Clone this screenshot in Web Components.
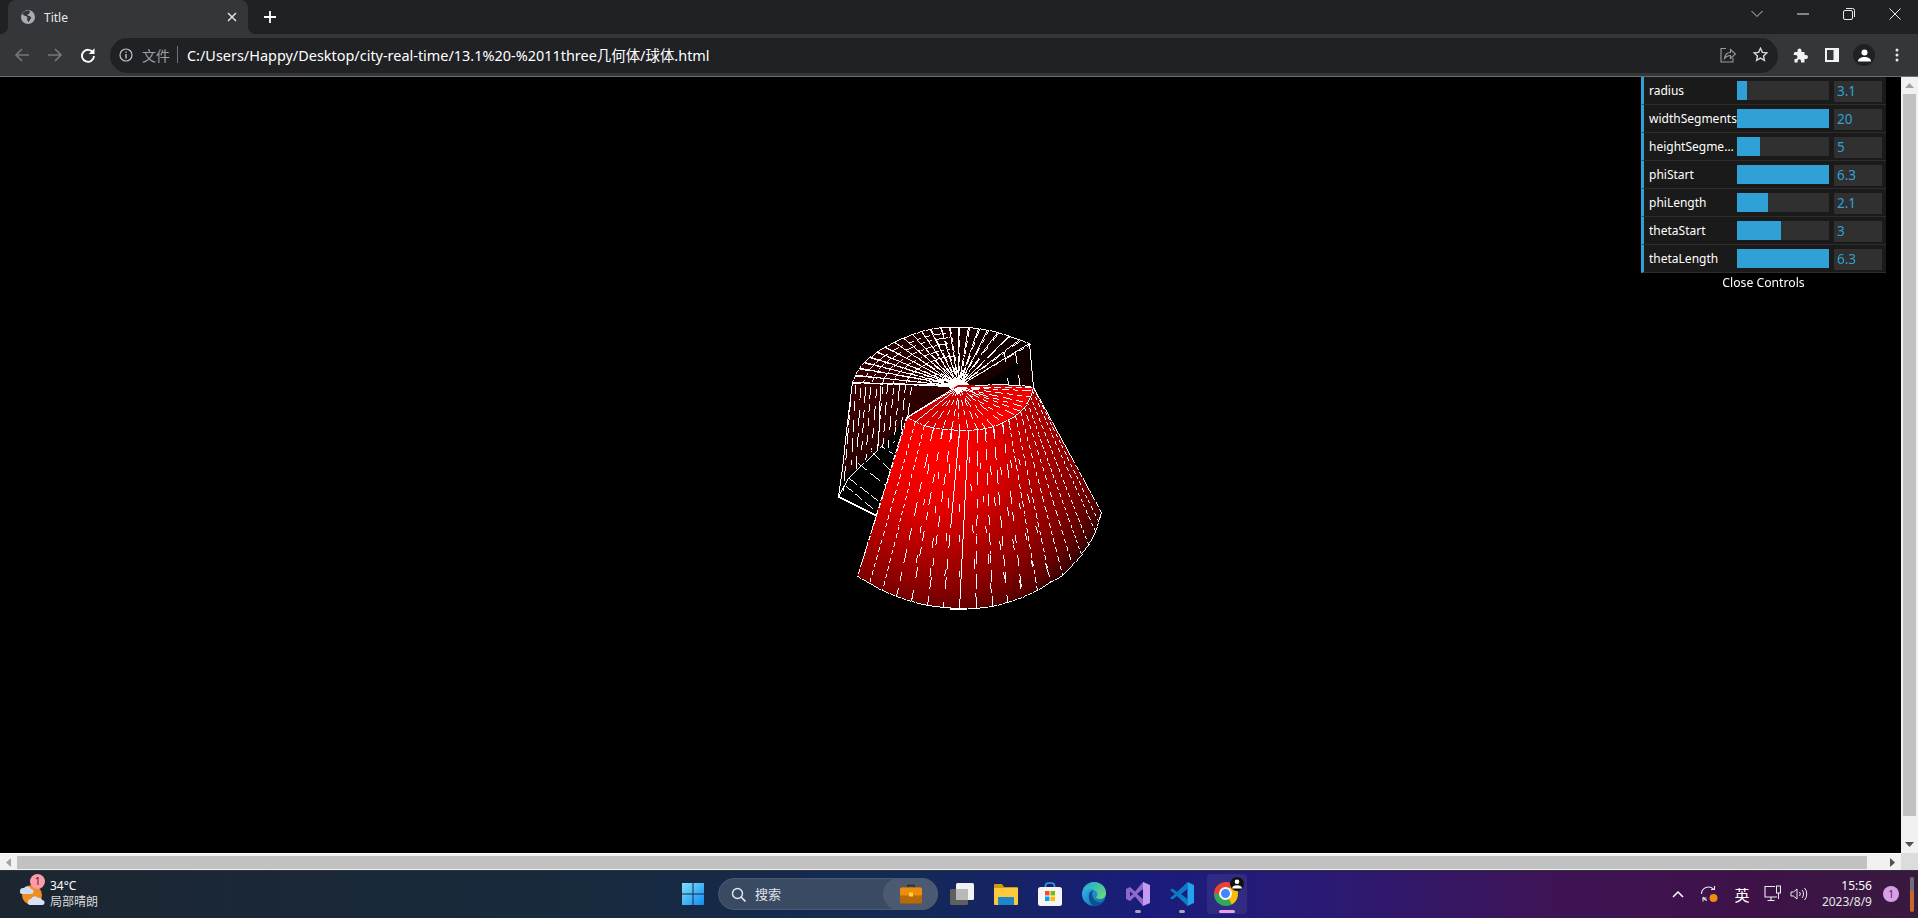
<!DOCTYPE html>
<html lang="zh">
<head>
<meta charset="utf-8">
<title>Title</title>
<style>
	html,body {margin:0;padding:0;width:1918px;height:918px;overflow:hidden;background:#000;}
	body {display:flex;flex-direction:column;font-family:"Noto Sans","Noto Sans CJK SC",sans-serif;}
</style>
</head>
<body>
<chrome-tabstrip></chrome-tabstrip>
<chrome-toolbar url="C:/Users/Happy/Desktop/city-real-time/13.1%20-%2011three几何体/球体.html"></chrome-toolbar>
<page-area>
	<mesh-view></mesh-view>
	<gui-panel>
		<gui-row label="radius" value="3.1" fill="10"></gui-row>
		<gui-row label="widthSegments" value="20" fill="92"></gui-row>
		<gui-row label="heightSegments" value="5" fill="23"></gui-row>
		<gui-row label="phiStart" value="6.3" fill="92"></gui-row>
		<gui-row label="phiLength" value="2.1" fill="31"></gui-row>
		<gui-row label="thetaStart" value="3" fill="44"></gui-row>
		<gui-row label="thetaLength" value="6.3" fill="92"></gui-row>
	</gui-panel>
</page-area>
<win-taskbar></win-taskbar>
<script>
class ShadowPart extends HTMLElement {
	constructor(){
		super();
		this.attachShadow({mode:"open"});
	}
}

class ChromeTabstrip extends ShadowPart {
	constructor(){
		super();
		this.shadowRoot.innerHTML = `
			<style>
				:host {display:flex;height:34px;background:#202124;color:#e8eaed;font-size:12px;align-items:stretch;}
				.tab {position:relative;margin-left:8px;width:240px;background:#35363a;border-radius:8px 8px 0 0;display:flex;align-items:center;box-sizing:border-box;padding:0 0 0 12px;}
				.tab::before,.tab::after {content:"";position:absolute;bottom:0;width:8px;height:8px;}
				.tab::before {left:-8px;background:radial-gradient(circle at 0 0,#202124 8px,#35363a 8.5px);}
				.tab::after {right:-8px;background:radial-gradient(circle at 100% 0,#202124 8px,#35363a 8.5px);}
				.title {margin-left:8px;flex:1;}
				.x {width:24px;height:24px;margin-right:4px;display:flex;align-items:center;justify-content:center;}
				.plus {width:26px;margin-left:9px;display:flex;align-items:center;justify-content:center;}
				.spacer {flex:1;}
				.btn {width:46px;display:flex;align-items:center;justify-content:center;padding-bottom:6px;}
				svg {display:block;}
			</style>
			<div class="tab">
				<svg width="16" height="16" viewBox="0 0 16 16"><circle cx="8" cy="8" r="7" fill="#a9acb0"/><path d="M8 1.500C5 1.500 3 3 2.200 5l2.300 1.800 1.500.2 1.500 1.500-.5 2 1 2.500 1-.5 1.500-2.500 1-1.500-2-1.500-1.500-.2-.5-1.300 1.500-.8 1-1.500C9.800 1.700 9 1.500 8 1.500z" fill="#35363a"/></svg>
				<span class="title">Title</span>
				<span class="x"><svg width="10" height="10" viewBox="0 0 10 10"><path d="M1 1l8 8M9 1l-8 8" stroke="#e8eaed" stroke-width="1.400"/></svg></span>
			</div>
			<span class="plus"><svg width="12" height="12" viewBox="0 0 12 12"><path d="M6 0v12M0 6h12" stroke="#fff" stroke-width="1.800"/></svg></span>
			<span class="spacer"></span>
			<span class="btn"><svg width="12" height="8" viewBox="0 0 12 8"><path d="M.5 1l5.500 5.500L11.500 1" fill="none" stroke="#c4c6c8"/></svg></span>
			<span class="btn"><svg width="12" height="2" viewBox="0 0 12 2"><path d="M0 1h12" stroke="#e8eaed"/></svg></span>
			<span class="btn"><svg width="12" height="12" viewBox="0 0 12 12"><rect x=".5" y="2.500" width="9" height="9" rx="1.500" fill="none" stroke="#e8eaed"/><path d="M3 .5h6.500a2 2 0 0 1 2 2V9" fill="none" stroke="#e8eaed"/></svg></span>
			<span class="btn"><svg width="12" height="12" viewBox="0 0 12 12"><path d="M.5.5l11 11M11.500.5l-11 11" stroke="#e8eaed"/></svg></span>
		`;
	}
}
customElements.define("chrome-tabstrip",ChromeTabstrip);

class ChromeToolbar extends ShadowPart {
	connectedCallback(){
		this.shadowRoot.innerHTML = `
			<style>
				:host {display:flex;height:43px;box-sizing:border-box;background:#35363a;border-bottom:1px solid #6f7073;padding:4px 4px 3px 5px;font-size:14.450px;color:#fff;}
				.btn {width:33px;display:flex;align-items:center;justify-content:center;flex:none;padding-bottom:1px;}
				.omni {flex:1;margin:0 6px;background:#202124;border-radius:18px;display:flex;align-items:center;padding:0 2px 2px 0;}
				.info {width:18px;margin-left:7px;display:flex;justify-content:center;}
				.scheme {margin-left:7px;color:#9aa0a6;font-size:14px;}
				.sep {width:1px;height:17px;background:#6f7175;margin:0 9px 0 7px;}
				.url {flex:1;white-space:nowrap;}
				.mini {width:32px;display:flex;justify-content:center;}
				.avatar {width:22px;height:22px;border-radius:50%;background:#202124;display:flex;align-items:center;justify-content:center;}
				svg {display:block;}
			</style>
			<span class="btn"><svg width="16" height="14" viewBox="0 0 16 14"><path d="M15 7H2M8 1L2 7l6 6" fill="none" stroke="#75777a" stroke-width="1.700"/></svg></span>
			<span class="btn"><svg width="16" height="14" viewBox="0 0 16 14"><path d="M1 7h13M8 1l6 6-6 6" fill="none" stroke="#75777a" stroke-width="1.700"/></svg></span>
			<span class="btn"><svg width="16" height="16" viewBox="0 0 16 16"><path d="M13 5.500A6 6 0 1 0 14 9" fill="none" stroke="#fff" stroke-width="1.900"/><path d="M14.500 1.200V7H8.700z" fill="#fff"/></svg></span>
			<div class="omni">
				<span class="info"><svg width="14" height="14" viewBox="0 0 14 14"><circle cx="7" cy="7" r="6" fill="none" stroke="#c0c3c6" stroke-width="1.200"/><path d="M7 6v4.500M7 3.500v1.300" stroke="#c0c3c6" stroke-width="1.400"/></svg></span>
				<span class="scheme">文件</span>
				<span class="sep"></span>
				<span class="url">${this.getAttribute("url")}</span>
				<span class="mini"><svg width="16" height="16" viewBox="0 0 16 16"><path d="M6 1.500H1v13.500h12v-4" fill="none" stroke="#9a9da1" stroke-width="1.100"/><path d="M4.500 11.500C5 7.500 7.500 5.500 10.500 5.500V2.500L15.500 7l-5 4.500V8.500C8 8.500 6 9.500 4.500 11.500z" fill="none" stroke="#9a9da1" stroke-width="1.100"/></svg></span>
				<span class="mini"><svg width="15" height="15" viewBox="0 0 15 15"><path d="M7.500 1.300l1.900 4.100 4.400.5-3.300 3 .9 4.400-3.900-2.200-3.900 2.200.9-4.400-3.300-3 4.400-.5z" fill="none" stroke="#d5d7d9" stroke-width="1.400"/></svg></span>
			</div>
			<span class="btn" style="width:32px"><svg width="15" height="15" viewBox="0 0 15 15"><path d="M1 4.500h3V3a2 2 0 0 1 4 0v1.500h3v3h1.500a2 2 0 0 1 0 4H11V15H7.500v-1.500a1.700 1.700 0 0 0-3.400 0V15H1v-3.500h1a2 2 0 0 0 0-4H0z" fill="#f1f3f4" transform="translate(.5 -.5)"/></svg></span>
			<span class="btn" style="width:32px"><svg width="14" height="14" viewBox="0 0 14 14"><rect width="14" height="14" fill="#f1f3f4"/><rect x="2" y="2" width="6.500" height="10" fill="#35363a"/></svg></span>
			<span class="btn" style="width:32px"><span class="avatar"><svg width="13" height="13" viewBox="0 0 13 13"><circle cx="6.500" cy="3.500" r="3" fill="#fff"/><path d="M0 12.500c0-3 3-4.500 6.500-4.500S13 9.500 13 12.500z" fill="#fff"/></svg></span></span>
			<span class="btn" style="width:34px"><svg width="4" height="14" viewBox="0 0 4 14"><circle cx="2" cy="2" r="1.500" fill="#e8eaed"/><circle cx="2" cy="7" r="1.500" fill="#e8eaed"/><circle cx="2" cy="12" r="1.500" fill="#e8eaed"/></svg></span>
		`;
	}
}
customElements.define("chrome-toolbar",ChromeToolbar);

class PageArea extends ShadowPart {
	constructor(){
		super();
		this.shadowRoot.innerHTML = `
			<style>
				:host {display:grid;grid-template-columns:1901px 17px;grid-template-rows:776px 17px;}
				.view {position:relative;background:#000;overflow:hidden;}
				.bar {background:#f1f1f1;position:relative;display:flex;}
				.v {flex-direction:column;align-items:center;}
				.h {align-items:center;border-top:1px solid #fff;box-sizing:border-box;}
				.thumb {background:#c1c1c1;}
				.v .thumb {width:13px;height:722px;}
				.h .thumb {height:13px;width:1850px;}
				.arrow {flex:none;width:17px;height:17px;display:flex;align-items:center;justify-content:center;}
				.fill {flex:1;}
				.corner {background:#dcdcdc;}
				svg {display:block;}
			</style>
			<div class="view"><slot></slot></div>
			<div class="bar v">
				<span class="arrow"><svg width="9" height="5" viewBox="0 0 9 5"><path d="M4.500 0L9 5H0z" fill="#a3a3a3"/></svg></span>
				<div class="thumb"></div>
				<div class="fill"></div>
				<span class="arrow"><svg width="9" height="5" viewBox="0 0 9 5"><path d="M0 0h9L4.500 5z" fill="#505050"/></svg></span>
			</div>
			<div class="bar h">
				<span class="arrow"><svg width="5" height="9" viewBox="0 0 5 9"><path d="M5 0v9L0 4.500z" fill="#a3a3a3"/></svg></span>
				<div class="thumb"></div>
				<div class="fill"></div>
				<span class="arrow"><svg width="5" height="9" viewBox="0 0 5 9"><path d="M0 0v9l5-4.500z" fill="#505050"/></svg></span>
			</div>
			<div class="corner"></div>
		`;
	}
}
customElements.define("page-area",PageArea);

class GuiPanel extends ShadowPart {
	constructor(){
		super();
		this.shadowRoot.innerHTML = `
			<style>
				:host {position:absolute;top:0;right:15px;width:245px;color:#fff;font:12.200px "Noto Sans",sans-serif;}
				.close {height:20px;line-height:19px;text-align:center;}
			</style>
			<slot></slot>
			<div class="close">Close Controls</div>
		`;
	}
}
customElements.define("gui-panel",GuiPanel);

class GuiRow extends ShadowPart {
	connectedCallback(){
		this.shadowRoot.innerHTML = `
			<style>
				:host {display:flex;height:28px;box-sizing:border-box;background:#1a1a1a;border-left:3px solid #2fa1d6;border-bottom:1px solid #2c2c2c;}
				.label {width:89px;margin:0 -1px 0 5px;flex:none;font-size:12px;line-height:27px;white-space:nowrap;overflow:hidden;text-overflow:ellipsis;}
				.slider {width:92px;height:19px;margin-top:4px;background:#303030;flex:none;}
				.fill {height:100%;background:#2fa1d6;}
				.num {width:48px;height:21px;margin:4px 0 0 5px;padding-left:3px;box-sizing:border-box;background:#303030;color:#2fa1d6;line-height:21px;font-size:13.500px;flex:none;}
			</style>
			<div class="label">${this.getAttribute("label")}</div>
			<div class="slider"><div class="fill" style="width:${this.getAttribute("fill")}px"></div></div>
			<div class="num">${this.getAttribute("value")}</div>
		`;
	}
}
customElements.define("gui-row",GuiRow);

class MeshView extends ShadowPart {
	constructor(){
		super();
		this.shadowRoot.innerHTML = `
			<style>
				:host {display:block;}
				canvas {display:block;}
			</style>
			<canvas width="1901" height="776"></canvas>
		`;
		this._ctx = this.shadowRoot.querySelector("canvas").getContext("2d");
		this._seed = 11;
		this.render();
	}

	_rand(){
		this._seed = (this._seed*16807)%2147483647;
		return this._seed/2147483647;
	}

	// aliased line, same look as WebGL lines. dash is [minOn,maxOn,minOff,maxOff]
	_line(x0,y0,x1,y1,dash,color){
		let ctx = this._ctx;
		ctx.fillStyle = color||"#fff";
		let n = Math.max(Math.abs(x1-x0),Math.abs(y1-y0))|0;
		let on = dash?dash[0]+this._rand()*(dash[1]-dash[0]):1e9;
		let off = 0;
		for (let i=0;i<=n;i++){
			if (on>0){
				ctx.fillRect(Math.round(x0+(x1-x0)*i/n),Math.round(y0+(y1-y0)*i/n),1,1);
				on--;
				if (on<=0) off = dash[2]+this._rand()*(dash[3]-dash[2]);
			}else{
				off--;
				if (off<=0) on = dash[0]+this._rand()*(dash[1]-dash[0]);
			}
		}
	}

	_poly(pts,dash){
		for (let i=0;i<pts.length-1;i++){
			this._line(pts[i][0],pts[i][1],pts[i+1][0],pts[i+1][1],dash);
		}
	}

	_fill(pts,style){
		let ctx = this._ctx;
		ctx.fillStyle = style;
		ctx.beginPath();
		pts.forEach((p,i)=>i?ctx.lineTo(p[0],p[1]):ctx.moveTo(p[0],p[1]));
		ctx.closePath();
		ctx.fill();
	}

	_smooth(pts){
		let out = [pts[0]];
		for (let i=0;i<pts.length-1;i++){
			let a = pts[i],b = pts[i+1];
			out.push([a[0]*.75+b[0]*.25,a[1]*.75+b[1]*.25]);
			out.push([a[0]*.25+b[0]*.75,a[1]*.25+b[1]*.75]);
		}
		out.push(pts[pts.length-1]);
		return out;
	}

	_yAt(pts,x){
		for (let i=0;i<pts.length-1;i++){
			if (x>=pts[i][0]&&x<=pts[i+1][0]){
				return pts[i][1]+(pts[i+1][1]-pts[i][1])*(x-pts[i][0])/((pts[i+1][0]-pts[i][0])||1);
			}
		}
		return pts[pts.length-1][1];
	}

	render(){
		let ctx = this._ctx;
		ctx.translate(0,-77);
		this._renderBack();
		this._renderFront();
	}

	_renderBack(){
		let ctx = this._ctx;
		let apex = [958,385];
		let arc = this._smooth(this._smooth([[852,382],[856,372],[863,362],[880,349],[903,337],[930,328],[958,326],[987,329],[1010,336],[1029,343]]));

		let glow = ctx.createRadialGradient(865,400,0,865,400,190);
		glow.addColorStop(0,"#3c0000");
		glow.addColorStop(.6,"#1c0000");
		glow.addColorStop(1,"#0c0000");
		this._fill(arc.concat([[1033,387],apex,[905,420],[880,447],[843,478],[838,496]]),glow);
		this._fill([[983,384],[1014,385],[1022,360]],"#000");

		// roof fan, two passes so the lines read heavy near the pole
		let xs = [852,855,859,864,870,877,885,894,903,912,921,930,940,949,958,968,978,987,997,1008,1019,1029];
		let ends = xs.map(x=>[x,this._yAt(arc,x)]);
		ends.forEach((e,i)=>{
			this._line(e[0],e[1],apex[0],apex[1]+(i%2),[10,30,1,2]);
			this._line(e[0]+1,e[1]+1,apex[0]+1,apex[1],[3,9,2,6]);
			if (i<ends.length-1) this._line(ends[i+1][0],ends[i+1][1],apex[0],apex[1]+1,[3,8,4,9]);
		});
		[.9,.82,.72,.62,.5].forEach(k=>{
			let ring = ends.slice(0,14).map(e=>[apex[0]+(e[0]-apex[0])*k,apex[1]+(e[1]-apex[1])*k]);
			this._poly(ring,[2,8,3,8]);
		});
		for (let i=0;i<40;i++){
			let a = this._rand()*Math.PI*2;
			this._line(apex[0]+Math.cos(a)*10,apex[1]+Math.sin(a)*4,apex[0]-Math.cos(a)*10,apex[1]-Math.sin(a)*4);
		}

		this._poly(arc);
		this._line(1029,343,1033,387);
		this._line(852,382,950,386,[18,50,1,3]);
		this._line(1015,352,1020,388,[6,14,6,12]);
		this._line(1004,352,1008,385,[5,10,10,16]);

		// wall, left side
		this._poly([[852,382],[849,405],[845,440],[842,468],[838,496]]);
		this._line(850,400,843,490,[5,16,2,6]);
		[855,860,865,870,876,882,887,893,899,905,911].forEach((x,i)=>{
			let top = 384+this._rand()*6;
			this._line(x,top,x-4-i*0.2,462-i*3+this._rand()*10,[6,16,3,10]);
		});
		this._line(880,386,878,445);

		// floor hatch
		this._line(838,496,875,514);
		this._line(838,497,875,515);
		this._line(838,496,848,478);
		this._line(848,478,880,447,[8,20,1,3]);
		this._line(881,446,895,455,[3,6,2,5]);
		[[858,463,884,484],[849,478,877,500],[873,453,890,470],[846,486,872,508]].forEach(l=>{
			this._line(l[0],l[1],l[2],l[3],[5,14,1,4]);
		});
	}

	_renderFront(){
		let ctx = this._ctx;
		let apex = [958,385];
		let cap = this._smooth(this._smooth([[907,417],[918,423],[930,427],[945,429],[963,430],[982,429],[1000,424],[1020,412],[1029,400],[1033,387]]));
		let base = this._smooth(this._smooth([[857,576],[869,583],[882,590],[896,596],[911,601],[927,605],[943,607],[959,608],[976,608],[992,606],[1007,602],[1022,597],[1037,590],[1050,582],[1062,575],[1075,562],[1088,545],[1095,532],[1098,521],[1101,512]]));

		let red = ctx.createRadialGradient(935,450,0,935,450,205);
		red.addColorStop(0,"#ff0000");
		red.addColorStop(.1,"#ff0000");
		red.addColorStop(.3,"#e00000");
		red.addColorStop(.5,"#b00000");
		red.addColorStop(.68,"#880000");
		red.addColorStop(.8,"#600000");
		red.addColorStop(.9,"#280000");
		red.addColorStop(1,"#080000");
		this._fill(cap.concat(base.slice().reverse()),red);

		let top = ctx.createLinearGradient(958,385,985,430);
		top.addColorStop(0,"#c80000");
		top.addColorStop(.6,"#e60000");
		top.addColorStop(1,"#ff0000");
		this._fill([apex].concat(cap,[[1000,385],[975,385]]),top);

		// 20 width segments give 21 meridians
		let topX = [907,915,924,933,942,951,959,968,977,985,993,1002,1008,1015,1020,1024,1027,1030,1032,1033,1033];
		let botX = [857,869,882,896,911,927,943,959,976,992,1007,1022,1037,1050,1062,1072,1081,1088,1095,1098,1101];
		let tops = topX.map(x=>[x,this._yAt(cap,x)]);
		let bots = botX.map(x=>[x,this._yAt(base,x)]);

		tops.forEach((t,i)=>{
			let b = bots[i];
			let dash = i<3?[3,5,2,4]:i<12?[7,15,5,14]:i<16?[3,6,2,4]:[2,4,1,3];
			if (i==7){
				this._line(t[0],t[1],b[0],b[1]);
			}else if (i==6){
				this._line(t[0],t[1],t[0]+(b[0]-t[0])*.5,t[1]+(b[1]-t[1])*.5);
				this._line(t[0]+(b[0]-t[0])*.5,t[1]+(b[1]-t[1])*.5,b[0],b[1],dash);
			}else{
				this._line(t[0],t[1],b[0],b[1],dash);
			}
			if (i>2&&i<13) this._line(t[0],t[1],bots[i+1][0],bots[i+1][1],[5,10,18,34]);
			this._line(apex[0]+(i%3-1),apex[1]+2,t[0],t[1],i<2?null:[4,9,3,5]);
		});

		// silhouette
		this._line(906,417,857,576,[3,5,1,2]);
		this._line(1033,387,1101,512,[4,8,1,2]);
		this._poly([[1101,512],[1098,521]]);
		this._poly(cap);
		this._poly(base,[5,16,1,2]);
		this._line(906,417,953,388);
		this._poly([[975,385],[1000,384],[1033,386]],[8,20,1,2]);
		this._line(950,608,966,608);
		this._line(950,609,966,609);
	}
}
customElements.define("mesh-view",MeshView);

class WinTaskbar extends ShadowPart {
	constructor(){
		super();
		this.shadowRoot.innerHTML = `
			<style>
				:host {display:grid;grid-template-columns:671px auto 1fr;height:48px;box-sizing:border-box;border-top:1px solid #2d3138;color:#fff;font:12px "Noto Sans","Noto Sans CJK SC",sans-serif;background:linear-gradient(90deg,#1c2630 0,#182a3e 600px,#132a55 900px,#1a1c7c 1150px,#2a1a75 1320px,#3e1456 1550px,#3e1248 1750px,#38193f 100%);}
				svg {display:block;}
				.weather {display:flex;align-items:center;padding-left:19px;position:relative;padding-bottom:1px;}
				.wx {position:relative;width:26px;height:26px;margin-right:5px;}
				.wx b {position:absolute;left:11px;top:-7px;width:15px;height:15px;border-radius:50%;background:#ff9aa9;color:#222;font:10px/15px "Noto Sans",sans-serif;text-align:center;}
				.wtext {line-height:16px;}
				.wtext div+div {color:#d8dadc;}
				.mid {display:flex;align-items:center;padding-bottom:1px;}
				.item {width:44px;height:40px;display:flex;align-items:center;justify-content:center;position:relative;flex:none;border-radius:4px;box-sizing:border-box;}
				.item::after {content:"";position:absolute;bottom:1px;left:19px;width:6px;height:3px;border-radius:2px;}
				.open::after {background:#a4a9b8;}
				.active {width:40px;margin-left:3px;background:rgba(255,255,255,.07);}
				.active::after {background:#e6a3e8;left:12px;width:16px;}
				.search {width:220px;height:32px;margin:0 2px 0 3px;border-radius:16px;background:#3a4a63;box-sizing:border-box;border:1px solid #4a5a72;display:flex;align-items:center;color:#dfe2e6;font-size:13px;position:relative;}
				.search svg.mag {margin-left:12px;}
				.search span {margin:0 0 2px 9px;}
				.brief {position:absolute;right:-1px;top:-1px;width:55px;height:32px;border-radius:16px;background:#4b5a70;display:flex;align-items:center;justify-content:center;}
				.tray {display:flex;align-items:center;justify-content:flex-end;padding-right:4px;padding-bottom:1px;}
				.t {display:flex;align-items:center;justify-content:center;flex:none;}
				.ime {width:34px;font-size:15px;font-family:"Noto Sans CJK SC",sans-serif;}
				.clock {width:61px;text-align:right;line-height:16px;font-size:12px;}
				.clock div+div {color:#e6e6e6;}
				.bell {width:38px;}
				.bell b {width:16px;height:16px;border-radius:50%;background:#d8a0e4;color:#4a2350;font:10px/16px "Noto Sans",sans-serif;text-align:center;}
				.desk {width:4px;height:35px;background:linear-gradient(#6c7075 0 40%,#c9662a 40%);border-radius:2px;}
				.chrome {width:24px;height:24px;border-radius:50%;background:conic-gradient(from 30deg,#fbbc04 0 120deg,#34a853 0 240deg,#ea4335 0);position:relative;margin-right:2px;}
				.chrome i {position:absolute;left:5px;top:5px;width:9px;height:9px;border:2.500px solid #f3f6fb;border-radius:50%;background:#4285f4;box-sizing:content-box;}
				.who {position:absolute;right:3px;top:3px;width:14px;height:14px;border-radius:50%;background:#111;display:flex;align-items:center;justify-content:center;}
			</style>
			<div class="weather">
				<div class="wx">
					<svg width="26" height="26" viewBox="0 0 26 26"><circle cx="13" cy="14" r="10" fill="#ef8d1e"/><path d="M1 10a3 3 0 0 1 3-3h1a4 4 0 0 1 7 1 2.500 2.500 0 0 1 0 5H3a2.500 2.500 0 0 1-2-3z" fill="#cfdcf5"/><path d="M9 21a3 3 0 0 1 3-3 4 4 0 0 1 7-1 3 3 0 0 1 4 2 2.500 2.500 0 0 1 0 5H11a2.500 2.500 0 0 1-2-3z" fill="#d8e2f7"/></svg>
					<b>1</b>
				</div>
				<div class="wtext"><div>34°C</div><div>局部晴朗</div></div>
			</div>
			<div class="mid">
				<span class="item"><svg width="24" height="24" viewBox="0 0 24 24"><defs><linearGradient id="w" x1="0" y1="0" x2="1" y2="1"><stop offset="0" stop-color="#7fe0fb"/><stop offset="1" stop-color="#0f8cf0"/></linearGradient></defs><path d="M1 1h10.500v10.500H1zM12.500 1H23v10.500H12.500zM1 12.500h10.500V23H1zM12.500 12.500H23V23H12.500z" fill="url(#w)"/></svg></span>
				<div class="search">
					<svg class="mag" width="15" height="15" viewBox="0 0 15 15"><circle cx="6.500" cy="6.500" r="5" fill="none" stroke="#e8eaed" stroke-width="1.400"/><path d="M10 10l4.500 4.500" stroke="#e8eaed" stroke-width="1.600"/></svg>
					<span>搜索</span>
					<div class="brief"><svg width="22" height="20" viewBox="0 0 22 20"><path d="M8 4V1.500h6V4" fill="none" stroke="#3a2a20" stroke-width="1.500"/><rect y="3.500" width="22" height="16" rx="1.500" fill="#b86a08"/><rect y="3.500" width="22" height="8" rx="1.500" fill="#ea8e0c"/><rect x="9" y="8.500" width="4" height="4" fill="#ffd23c"/></svg></div>
				</div>
				<span class="item"><svg width="24" height="24" viewBox="0 0 24 24"><rect x="6" y="1" width="18" height="17" rx="1.500" fill="#f2f2f2"/><rect y="7" width="18" height="16" rx="1.500" fill="#5f5f5f"/><rect x="6" y="7" width="12" height="11" fill="#b9b9b9"/></svg></span>
				<span class="item"><svg width="24" height="24" viewBox="0 0 24 24"><path d="M0 3a1 1 0 0 1 1-1h7l2 3h13a1 1 0 0 1 1 1v4H0z" fill="#d39a10"/><path d="M0 6h24v16a1 1 0 0 1-1 1H1a1 1 0 0 1-1-1z" fill="#fcc93a"/><path d="M5 15h14a1 1 0 0 1 1 1v7H4v-7a1 1 0 0 1 1-1z" fill="#1f86c8"/></svg></span>
				<span class="item"><svg width="24" height="24" viewBox="0 0 24 24"><path d="M7.500 7V4a3 3 0 0 1 3-3h3a3 3 0 0 1 3 3v3" fill="none" stroke="#2aa7e8" stroke-width="1.600"/><rect y="5" width="24" height="19" rx="2.500" fill="#f6f6f6"/><rect x="7" y="9" width="4.500" height="4.500" fill="#f25022"/><rect x="12.500" y="9" width="4.500" height="4.500" fill="#7fba00"/><rect x="7" y="14.500" width="4.500" height="4.500" fill="#00a4ef"/><rect x="12.500" y="14.500" width="4.500" height="4.500" fill="#ffb900"/></svg></span>
				<span class="item"><svg width="24" height="24" viewBox="0 0 24 24"><defs><linearGradient id="e" x1="0" y1="0" x2="1" y2="1"><stop offset="0" stop-color="#35c1f1"/><stop offset="1" stop-color="#0a5fa8"/></linearGradient><linearGradient id="g" x1="0" y1="0" x2="1" y2="1"><stop offset="0" stop-color="#1fa7d8"/><stop offset="1" stop-color="#6fe06a"/></linearGradient></defs><circle cx="12" cy="12" r="12" fill="url(#e)"/><path d="M2 8C4 2 9 0 12 0c7 0 12 5 12 11 0 4-3 6-6 6-2 0-4-1-4-2 1-1 2-2 1-4-1-3-5-5-8-4-2 0-4 1-5 1z" fill="url(#g)"/><path d="M7 13c0-3 3-5 5-4-3 0-2.500 9 4 11 1 .5 3 .5 4 0-2 2.500-5 4-8 4-3-.5-6-7-5-11z" fill="#0c4f94"/></svg></span>
				<span class="item open"><svg width="24" height="24" viewBox="0 0 24 24"><path d="M0 7l4-2 5 4.500L17 0v7l-6 5 6 5v7L9 14.500 4 19l-4-2zM4 9.500v5l3-2.500z" fill="#8d69cc" fill-rule="evenodd"/><path d="M17 0l7 3v18l-7 3z" fill="#c49bf0"/></svg></span>
				<span class="item open"><svg width="24" height="24" viewBox="0 0 24 24"><path d="M0 8l2.500-1.500L7 10 17.500 0v7L11 12l6.500 5v7L7 14l-4.500 3.500L0 16l5-4z" fill="#0a7cc4"/><path d="M17.500 0L24 3v18l-6.500 3z" fill="#22a3ee"/></svg></span>
				<span class="item active"><span class="chrome"><i></i></span><span class="who"><svg width="10" height="10" viewBox="0 0 13 13"><circle cx="6.500" cy="3.500" r="3" fill="#fff"/><path d="M0 12.500c0-3 3-4.500 6.500-4.500S13 9.500 13 12.500z" fill="#fff"/></svg></span></span>
			</div>
			<div class="tray">
				<span class="t" style="width:30px"><svg width="12" height="7" viewBox="0 0 12 7"><path d="M1 6l5-5 5 5" fill="none" stroke="#fff" stroke-width="1.500"/></svg></span>
				<span class="t" style="width:32px"><svg width="18" height="18" viewBox="0 0 18 18"><path d="M1.500 9a7 7 0 0 1 12-4.800" fill="none" stroke="#e8e8e8" stroke-width="1.100"/><path d="M14.500 1v3.500H11" fill="none" stroke="#e8e8e8" stroke-width="1.100"/><path d="M3 12a7 7 0 0 0 4 3.500M3 16.500V13h3.500" fill="none" stroke="#e8e8e8" stroke-width="1.100"/><circle cx="13.500" cy="13" r="4" fill="#f08c10"/></svg></span>
				<span class="t ime">英</span>
				<span class="t" style="width:28px"><svg width="18" height="18" viewBox="0 0 18 18"><path d="M11 1.500H1v10.500h12M7 12v3M3.500 15.500h7" fill="none" stroke="#eee" stroke-width="1.100"/><rect x="12.500" y="1" width="4" height="7" fill="none" stroke="#eee"/><path d="M14.500 8v6" stroke="#eee"/></svg></span>
				<span class="t" style="width:24px"><svg width="18" height="14" viewBox="0 0 18 14"><path d="M1 5v4h2.500L7 12V2L3.500 5z" fill="none" stroke="#eee"/><path d="M9.500 5a3 3 0 0 1 0 4M12 3a6 6 0 0 1 0 8M14.500 1a9 9 0 0 1 0 12" fill="none" stroke="#eee"/></svg></span>
				<div class="clock"><div>15:56</div><div>2023/8/9</div></div>
				<span class="t bell"><b>1</b></span>
				<span class="desk"></span>
			</div>
		`;
	}
}
customElements.define("win-taskbar",WinTaskbar);
</script>
</body>
</html>
